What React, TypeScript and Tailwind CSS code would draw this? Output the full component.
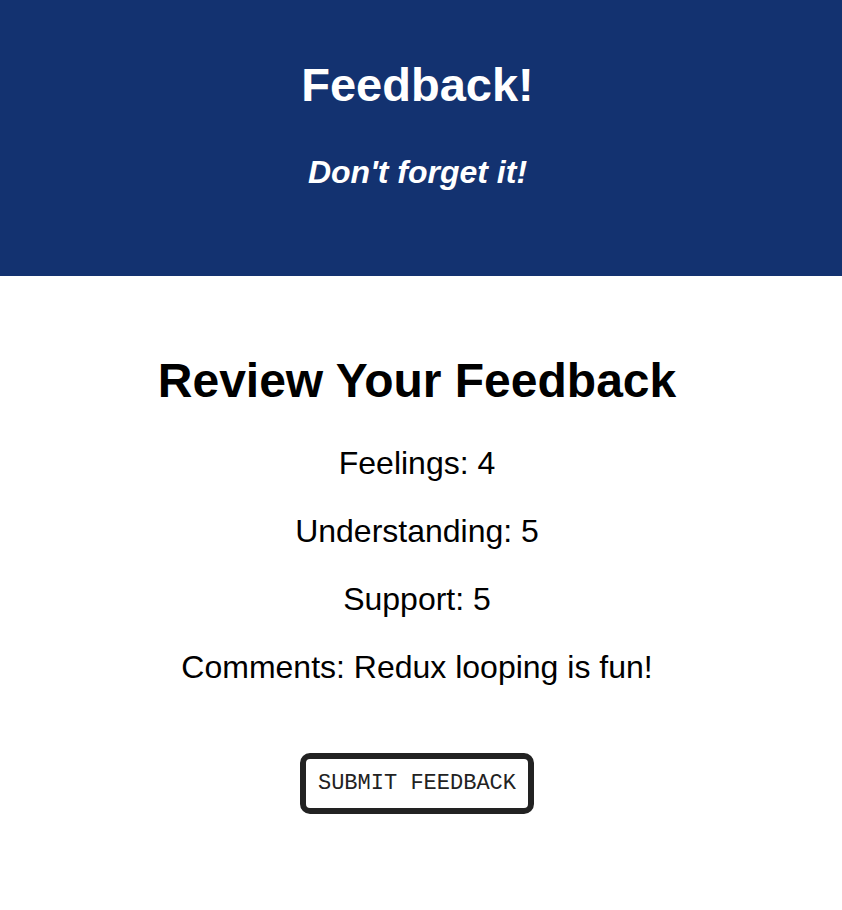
export default function App() {
  const items = [
    "Feelings: 4",
    "Understanding: 5",
    "Support: 5",
    "Comments: Redux looping is fun!",
  ]

  return (
    <div className="min-h-[910px] bg-white text-black font-['Liberation_Sans',Arial,sans-serif] text-center">
      <header className="h-[276px] bg-[#133270] text-white flex flex-col items-center pt-[60px] pr-[7px]">
        <h1 className="text-[47px] leading-[50px] font-bold">Feedback!</h1>
        <h4 className="mt-[43px] text-[32px] leading-[38px] font-bold italic">Don&apos;t forget it!</h4>
      </header>

      <main className="flex flex-col items-center pt-[75px] pr-[8px]">
        <h2 className="text-[48px] leading-[60px] font-bold">Review Your Feedback</h2>
        <div className="mt-[33px] flex flex-col gap-[30px]">
          {items.map((item) => (
            <p key={item} className="text-[32px] leading-[38px]">{item}</p>
          ))}
        </div>
        <button className="mt-[67px] h-[61px] px-[12px] border-[6px] border-[#222] rounded-[10px] bg-white font-['Liberation_Mono','Courier_New',monospace] text-[22px] text-[#222]">
          SUBMIT FEEDBACK
        </button>
      </main>
    </div>
  )
}
